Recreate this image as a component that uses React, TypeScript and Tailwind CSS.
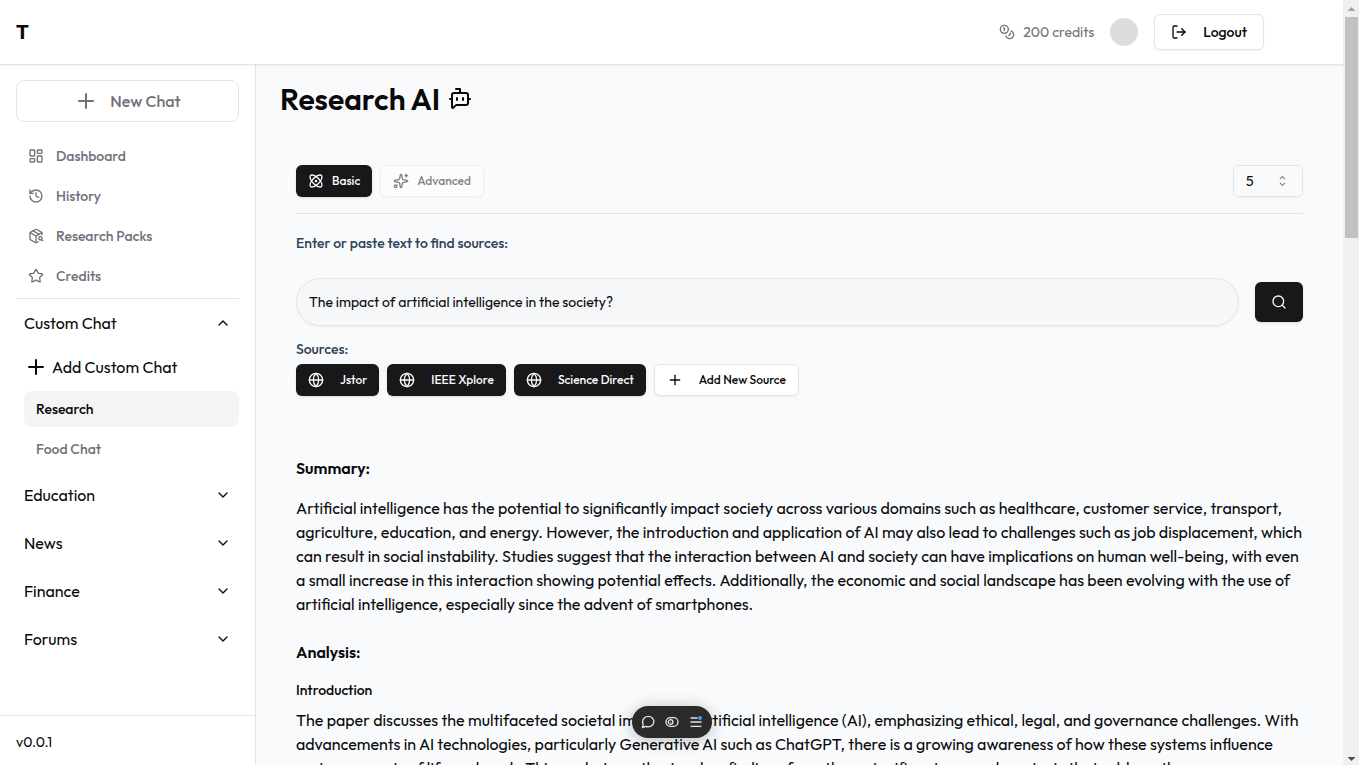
import {
  Atom,
  BotMessageSquare,
  ChevronDown,
  ChevronUp,
  Coins,
  Globe,
  History,
  LayoutDashboard,
  LogOut,
  PackageSearch,
  Plus,
  Search,
  Sparkles,
  Star,
} from 'lucide-react';

const navLinks = [
  { label: 'Dashboard', icon: LayoutDashboard },
  { label: 'History', icon: History },
  { label: 'Research Packs', icon: PackageSearch },
  { label: 'Credits', icon: Star },
];

const sections = ['Education', 'News', 'Finance', 'Forums'];

const sources = ['Jstor', 'IEEE Xplore', 'Science Direct'];

const summary =
  'Artificial intelligence has the potential to significantly impact society across various domains such as healthcare, customer service, transport, agriculture, education, and energy. However, the introduction and application of AI may also lead to challenges such as job displacement, which can result in social instability. Studies suggest that the interaction between AI and society can have implications on human well-being, with even a small increase in this interaction showing potential effects. Additionally, the economic and social landscape has been evolving with the use of artificial intelligence, especially since the advent of smartphones.';

const introduction =
  'The paper discusses the multifaceted societal impacts of artificial intelligence (AI), emphasizing ethical, legal, and governance challenges. With advancements in AI technologies, particularly Generative AI such as ChatGPT, there is a growing awareness of how these systems influence various aspects of life and work. This analysis synthesizes key findings from three significant research projects that address the';

function Header() {
  return (
    <header className="z-10 flex h-[65px] shrink-0 items-center justify-between border-b border-zinc-200 bg-white pr-[79px] pl-4 shadow-xs">
      <span className="text-xl font-bold">T</span>
      <div className="flex items-center gap-4">
        <div className="flex items-center gap-2 text-sm text-zinc-500">
          <Coins className="size-4" />
          <span>200 credits</span>
        </div>
        <div className="size-7 rounded-full bg-[#dddddd]" />
        <button className="flex h-9 items-center gap-4 rounded-md border border-zinc-200 bg-white px-4 text-sm font-medium shadow-xs">
          <LogOut className="size-4" />
          Logout
        </button>
      </div>
    </header>
  );
}

function Sidebar() {
  return (
    <aside className="flex w-64 shrink-0 flex-col border-r border-zinc-200 bg-white">
      <div className="flex-1 px-4 pt-[15px]">
        <button className="flex h-[42px] w-full items-center justify-center gap-3 rounded-lg border border-zinc-200 font-medium text-zinc-500">
          <Plus className="size-6" />
          New Chat
        </button>
        <nav className="mt-4 flex flex-col gap-1 border-b border-zinc-200 pb-1">
          {navLinks.map(({ label, icon: Icon }) => (
            <a key={label} href="#" className="flex h-9 items-center gap-3 px-3 text-sm font-medium text-zinc-500">
              <Icon className="size-4" />
              {label}
            </a>
          ))}
        </nav>
        <button className="flex h-12 w-full items-center justify-between px-2">
          Custom Chat
          <ChevronUp className="size-4" />
        </button>
        <div className="flex flex-col pl-2">
          <button className="mb-1 flex h-10 items-center gap-1">
            <Plus className="size-6" />
            Add Custom Chat
          </button>
          <a href="#" className="flex h-9 items-center rounded-lg bg-zinc-100 px-3 text-sm font-medium">
            Research
          </a>
          <a href="#" className="mt-1 flex h-9 items-center px-3 text-sm font-medium text-zinc-500">
            Food Chat
          </a>
        </div>
        <div className="mt-1">
          {sections.map((name) => (
            <button key={name} className="flex h-12 w-full items-center justify-between px-2">
              {name}
              <ChevronDown className="size-4" />
            </button>
          ))}
        </div>
      </div>
      <div className="border-t border-zinc-200 px-4 pt-4 pb-[13px] text-sm">v0.0.1</div>
    </aside>
  );
}

function ModeBar() {
  return (
    <div className="flex items-center justify-between border-b border-zinc-200 pb-4">
      <div className="flex gap-2">
        <button className="flex h-8 items-center gap-2 rounded-md bg-zinc-900 px-3 text-xs font-medium text-zinc-50 shadow-sm">
          <Atom className="size-4" />
          Basic
        </button>
        <button
          disabled
          className="flex h-8 items-center gap-2 rounded-md border border-zinc-200 bg-white px-3 text-xs font-medium opacity-50 shadow-xs"
        >
          <Sparkles className="size-4" />
          Advanced
        </button>
      </div>
      <div className="relative">
        <select
          aria-label="Number of sources"
          className="h-8 w-[70px] appearance-none rounded-md border border-zinc-200 px-3 text-sm shadow-xs"
        >
          <option>5</option>
          <option>10</option>
        </select>
        <svg
          viewBox="0 0 15 15"
          className="pointer-events-none absolute top-2 right-3 size-4 opacity-50"
          fill="none"
          stroke="currentColor"
        >
          <path d="M4.700 5.700L7 3.200 9.300 5.700M4.700 9.300L7 11.800 9.300 9.300" />
        </svg>
      </div>
    </div>
  );
}

function SearchForm() {
  return (
    <form onSubmit={(e) => e.preventDefault()}>
      <label htmlFor="query" className="mt-[22px] block text-sm leading-none font-medium text-slate-700">
        Enter or paste text to find sources:
      </label>
      <div className="mt-7 flex items-center gap-4">
        <input
          id="query"
          defaultValue="The impact of artificial intelligence in the society?"
          className="h-12 min-w-0 flex-1 rounded-full border border-zinc-200 bg-zinc-100/50 px-3 text-sm shadow-xs"
        />
        <button
          aria-label="Search"
          className="flex h-10 w-12 items-center justify-center rounded-md bg-zinc-900 text-zinc-50 shadow-sm"
        >
          <Search className="size-4" />
        </button>
      </div>
    </form>
  );
}

function Sources() {
  return (
    <div className="mt-4">
      <p className="mb-2 text-sm leading-none font-medium text-slate-700">Sources:</p>
      <div className="flex gap-2">
        {sources.map((name) => (
          <button
            key={name}
            className="flex h-8 items-center gap-4 rounded-md bg-zinc-900 px-3 text-xs font-medium text-zinc-50 shadow-sm"
          >
            <Globe className="size-4" />
            {name}
          </button>
        ))}
        <button className="flex h-8 items-center gap-4 rounded-md border border-zinc-200 bg-white px-3 text-xs font-medium shadow-xs">
          <Plus className="size-4" />
          Add New Source
        </button>
      </div>
    </div>
  );
}

function Toolbar() {
  return (
    <div className="absolute bottom-[27px] left-1/2 flex h-8 w-20 -translate-x-1/2 items-center justify-center gap-2 rounded-full bg-[#2b2b2b] text-zinc-200 shadow-[0_2px_16px_rgba(0,0,0,0.25)]">
      <button aria-label="Comments">
        <svg viewBox="0 0 16 16" className="size-4" fill="none" stroke="currentColor" strokeWidth="1.3">
          <path
            d="M2.400 13.600l.9-3A5 4.800 0 0 1 2.600 7.600C2.600 4.700 5.100 2.400 8.300 2.400s5.600 2.300 5.600 5.200-2.500 5.200-5.600 5.200c-1 0-1.900-.2-2.700-.5z"
            strokeLinejoin="round"
          />
        </svg>
      </button>
      <button aria-label="Preview">
        <svg viewBox="0 0 16 16" className="size-4" fill="none" stroke="currentColor" strokeWidth="1.3">
          <rect x="2" y="3.600" width="12" height="8.800" rx="4.400" />
          <circle cx="6.600" cy="8" r="2.300" />
          <circle cx="6.600" cy="8" r="0.600" fill="currentColor" stroke="none" />
        </svg>
      </button>
      <button aria-label="Menu">
        <svg viewBox="0 0 16 16" className="size-4" fill="none" stroke="currentColor" strokeWidth="1.3">
          <path d="M2.500 4h7M2.500 8h11M2.500 12.300h11" />
          <circle cx="12" cy="4" r="2" fill="#3b9cff" stroke="none" />
        </svg>
      </button>
    </div>
  );
}

function Scrollbar() {
  return (
    <div aria-hidden="true" className="flex w-4 shrink-0 flex-col items-center justify-between bg-[#f0f0f0]">
      <svg viewBox="0 0 16 17" className="h-[17px] w-4 shrink-0">
        <path d="M4.500 11h8L8.500 7z" fill="#a3a3a3" />
      </svg>
      <div className="flex w-full flex-1 justify-center">
        <div className="h-[221px] w-[13px] bg-[#c1c1c1]" />
      </div>
      <svg viewBox="0 0 16 17" className="h-[17px] w-4 shrink-0">
        <path d="M4.500 9h8L8.500 13z" fill="#505050" />
      </svg>
    </div>
  );
}

export default function App() {
  return (
    <div className="flex h-screen overflow-hidden font-[Outfit,Lato,sans-serif] text-zinc-950">
      <div className="relative flex min-w-0 flex-1 flex-col">
        <Header />
        <div className="flex min-h-0 flex-1">
          <Sidebar />
          <main className="min-w-0 flex-1 overflow-hidden bg-slate-50 px-6 pt-4">
            <h1 className="flex items-center gap-2 text-3xl font-semibold">
              Research AI
              <BotMessageSquare className="size-6" />
            </h1>
            <div className="px-4 pt-12">
              <ModeBar />
              <SearchForm />
              <Sources />
              <article className="mt-[60px]">
                <h2 className="font-semibold">Summary:</h2>
                <p className="mt-4">{summary}</p>
                <h2 className="mt-6 font-semibold">Analysis:</h2>
                <h3 className="mt-4 text-sm font-medium">Introduction</h3>
                <p className="mt-2">{introduction}</p>
              </article>
            </div>
          </main>
        </div>
        <Toolbar />
      </div>
      <Scrollbar />
    </div>
  );
}
